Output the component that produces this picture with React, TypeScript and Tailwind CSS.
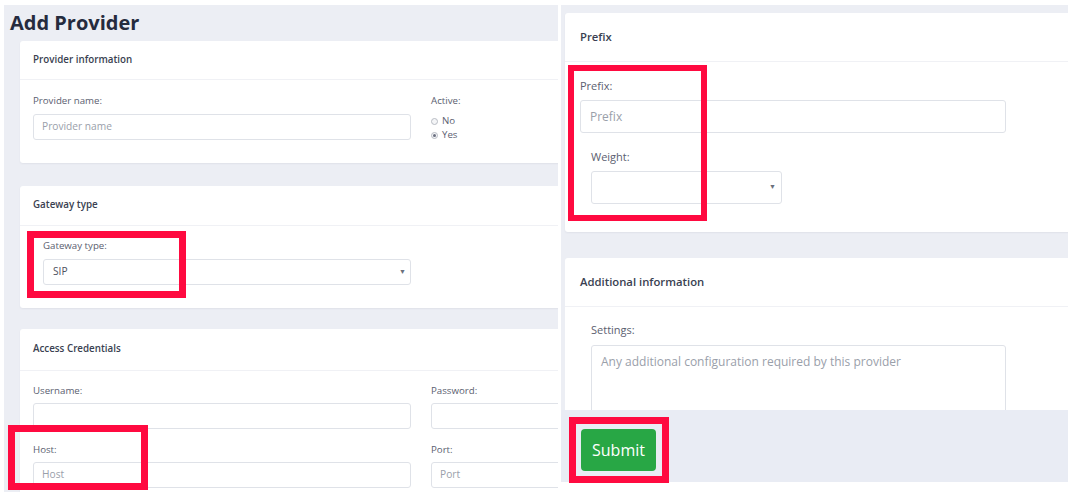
import React from "react";

const RED = "border-[#ff0a40]";

function LLabel({ children }: { children: React.ReactNode }) {
  return <div className="text-[9.7px] leading-[13px] text-[#5b6070]">{children}</div>;
}

function LInput({ placeholder, value }: { placeholder?: string; value?: string }) {
  return (
    <div className="h-[26px] bg-white border border-[#dfe2e8] rounded-[3px] flex items-center px-[8px] text-[10.2px]">
      {placeholder ? <span className="text-[#9aa0aa]">{placeholder}</span> : null}
      {value ? <span className="text-[#4d5260]">{value}</span> : null}
    </div>
  );
}

function LCardHeader({ title, h }: { title: string; h: string }) {
  return (
    <div className={`${h} flex items-center px-[13px] border-b border-[#f0f1f5] text-[9.8px] font-semibold text-[#3a3f51]`}>
      {title}
    </div>
  );
}

function RLabel({ children }: { children: React.ReactNode }) {
  return <div className="text-[11px] leading-[15px] text-[#5b6070]">{children}</div>;
}

function RCardHeader({ title }: { title: string }) {
  return (
    <div className="h-[49px] flex items-center px-[15px] border-b border-[#f0f1f5] text-[11.3px] font-semibold text-[#3a3f51]">
      {title}
    </div>
  );
}

function Radio({ checked, label }: { checked?: boolean; label: string }) {
  return (
    <div className="h-[14px] flex items-center gap-[4px] text-[9.7px] text-[#5b6070]">
      <span className="w-[7px] h-[7px] rounded-full border border-[#b8bcc4] bg-[#f4f5f7] flex items-center justify-center">
        {checked ? <span className="w-[3px] h-[3px] rounded-full bg-[#6b7080]" /> : null}
      </span>
      <span>{label}</span>
    </div>
  );
}

export default function App() {
  return (
    <div className="relative w-[1071px] h-[495px] bg-white overflow-hidden font-['Open_Sans',sans-serif]">
      <div className="flex">
        {/* Left screenshot */}
        <div className="ml-[4px] mt-[5px] w-[554px] h-[487px] bg-[#eceef4] overflow-hidden flex flex-col shrink-0">
          <div className="h-[36px] shrink-0 flex items-center pl-[6px] text-[20px] font-bold text-[#252b3e] leading-none">
            Add Provider
          </div>

          {/* Card 1 */}
          <div className="ml-[16px] w-[560px] shrink-0 bg-white rounded-[3px] shadow-[0_1px_2px_rgba(30,40,70,0.06)]">
            <LCardHeader title="Provider information" h="h-[39px]" />
            <div className="px-[13px] pt-[14px] pb-[23px] grid grid-cols-[378px_1fr] gap-x-[20px]">
              <div>
                <LLabel>Provider name:</LLabel>
                <div className="mt-[7px]">
                  <LInput placeholder="Provider name" />
                </div>
              </div>
              <div className="h-[46px]">
                <LLabel>Active:</LLabel>
                <div className="mt-[7px] flex flex-col">
                  <Radio label="No" />
                  <Radio label="Yes" checked />
                </div>
              </div>
            </div>
          </div>

          {/* Card 2 */}
          <div className="mt-[23px] ml-[16px] w-[560px] shrink-0 bg-white rounded-[3px] shadow-[0_1px_2px_rgba(30,40,70,0.06)]">
            <LCardHeader title="Gateway type" h="h-[40px]" />
            <div className="px-[13px] pt-[13px] pb-[23px] grid grid-cols-[378px_1fr] gap-x-[20px]">
              <div className="pl-[10px]">
                <LLabel>Gateway type:</LLabel>
                <div className="mt-[7px] h-[26px] bg-white border border-[#dfe2e8] rounded-[3px] flex items-center justify-between pl-[9px] pr-[4px] text-[10.2px]">
                  <span className="text-[#4d5260]">SIP</span>
                  <span className="text-[7px] text-[#6a6f7c]">▼</span>
                </div>
              </div>
              <div />
            </div>
          </div>

          {/* Card 3 */}
          <div className="mt-[21px] ml-[16px] w-[560px] shrink-0 bg-white rounded-[3px] shadow-[0_1px_2px_rgba(30,40,70,0.06)]">
            <LCardHeader title="Access Credentials" h="h-[42px]" />
            <div className="px-[13px] pt-[13px] pb-[20px] grid grid-cols-[378px_1fr] gap-x-[20px] gap-y-[14px]">
              <div>
                <LLabel>Username:</LLabel>
                <div className="mt-[6px]">
                  <LInput />
                </div>
              </div>
              <div>
                <LLabel>Password:</LLabel>
                <div className="mt-[6px]">
                  <LInput />
                </div>
              </div>
              <div>
                <LLabel>Host:</LLabel>
                <div className="mt-[6px]">
                  <LInput placeholder="Host" />
                </div>
              </div>
              <div>
                <LLabel>Port:</LLabel>
                <div className="mt-[6px]">
                  <LInput placeholder="Port" />
                </div>
              </div>
            </div>
          </div>
        </div>

        {/* Right screenshot */}
        <div className="ml-[3px] mt-[5px] w-[507px] h-[477px] bg-[#eceef4] overflow-hidden flex flex-col shrink-0">
          {/* Prefix card */}
          <div className="mt-[8px] ml-[4px] w-[520px] shrink-0 bg-white rounded-[3px] shadow-[0_1px_2px_rgba(30,40,70,0.06)]">
            <RCardHeader title="Prefix" />
            <div className="pl-[15px] pt-[16px] pb-[28px]">
              <RLabel>Prefix:</RLabel>
              <div className="mt-[7px] w-[426px] h-[33px] border border-[#dfe2e8] rounded-[3px] flex items-center px-[9px] text-[12px] text-[#9aa0aa]">
                Prefix
              </div>
              <div className="pl-[11px] mt-[16px]">
                <RLabel>Weight:</RLabel>
                <div className="mt-[7px] w-[191px] h-[33px] border border-[#dfe2e8] rounded-[3px] flex items-center justify-end pr-[5px]">
                  <span className="text-[7px] text-[#6a6f7c]">▼</span>
                </div>
              </div>
            </div>
          </div>

          {/* Additional information card */}
          <div className="mt-[26px] ml-[4px] w-[520px] h-[152px] shrink-0 overflow-hidden bg-white rounded-t-[3px]">
            <RCardHeader title="Additional information" />
            <div className="pl-[26px] pt-[15px]">
              <RLabel>Settings:</RLabel>
              <div className="mt-[8px] w-[415px] h-[90px] border border-[#dfe2e8] rounded-[3px] px-[9px] pt-[8px] text-[12px] leading-[16px] text-[#9aa0aa]">
                Any additional configuration required by this provider
              </div>
            </div>
          </div>

          {/* Footer */}
          <div className="h-[72px] shrink-0 bg-[#e9ecf4] pl-[20px] pt-[19px]">
            <button className="w-[75px] h-[42px] rounded-[4px] bg-[#28a745] text-white text-[16px] flex items-center justify-center">
              Submit
            </button>
          </div>
        </div>
      </div>

      {/* Red annotation boxes */}
      <div className={`absolute left-[27px] top-[231px] w-[159px] h-[67px] border-[7px] ${RED}`} />
      <div className={`absolute left-[8px] top-[425px] w-[140px] h-[65px] border-[7px] ${RED}`} />
      <div className={`absolute left-[568px] top-[65px] w-[139px] h-[156px] border-[6px] ${RED}`} />
      <div className={`absolute left-[569px] top-[417px] w-[100px] h-[66px] border-[7px] ${RED}`} />
    </div>
  );
}
